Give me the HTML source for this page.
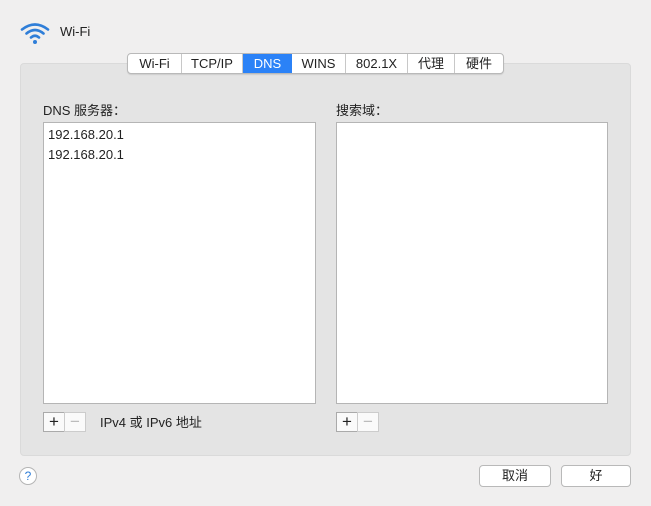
<!DOCTYPE html><html><head><meta charset="utf-8"><style>
*{margin:0;padding:0;box-sizing:border-box}
body{width:651px;height:506px;background:#f0efef;font-family:"Liberation Sans","Noto Sans CJK SC",sans-serif;font-size:13px;color:#222;position:relative;overflow:hidden}
.a{position:absolute}
.panel{left:20px;top:63px;width:611px;height:393px;background:#e4e4e4;border-radius:4px;border:1px solid #dadada}
.tabs{left:127px;top:53px;height:21px;display:flex;border:1px solid #b9b9b9;border-radius:4px;background:#fff;overflow:hidden;box-shadow:0 1px 1px rgba(0,0,0,.1)}
.tabs div{height:19px;line-height:19px;text-align:center;border-right:1px solid #c8c8c8;font-size:13px}
.tabs div:last-child{border-right:none}
.tabs .sel{background:#2b82f7;color:#fff;border-right:none}
.list{background:#fff;border:1px solid #b5b5b5}
.btn{background:#fff;border:1px solid #b9b9b9;border-radius:4px;text-align:center;line-height:19px;font-size:13px}
.pm{width:22px;height:20px;border:1px solid #aaa;background:#fafafa;text-align:center;line-height:17px;font-size:17px}
</style></head><body>
<svg class="a" style="left:20px;top:21px" width="30" height="24" viewBox="0 0 30 24"><g fill="none" stroke="#2f7ed8" stroke-width="2.6" stroke-linecap="round"><path d="M2 8.5 Q15 -1.5 28 8.5"/><path d="M6.5 12.5 Q15 5.5 23.5 12.5"/><path d="M11 16.5 Q15 13 19 16.5"/></g><circle cx="15" cy="21" r="2" fill="#2f7ed8"/></svg>
<div class="a" style="left:60px;top:24px;font-size:13px">Wi-Fi</div>
<div class="a panel"></div>
<div class="a tabs"><div style="width:54px">Wi-Fi</div><div style="width:61px">TCP/IP</div><div class="sel" style="width:49px">DNS</div><div style="width:54px">WINS</div><div style="width:62px">802.1X</div><div style="width:47px">代理</div><div style="width:48px">硬件</div></div>
<div class="a" style="left:43px;top:100px">DNS 服务器：</div>
<div class="a" style="left:336px;top:100px">搜索域：</div>
<div class="a list" style="left:43px;top:122px;width:273px;height:282px;padding:2px 4px;line-height:20px">192.168.20.1<br>192.168.20.1</div>
<div class="a list" style="left:336px;top:122px;width:272px;height:282px"></div>
<div class="a pm" style="left:43px;top:412px;color:#222">+</div><div class="a pm" style="left:64px;top:412px;color:#bbb;border-color:#ccc">−</div>
<div class="a" style="left:100px;top:412px">IPv4 或 IPv6 地址</div>
<div class="a pm" style="left:336px;top:412px;color:#222">+</div><div class="a pm" style="left:357px;top:412px;color:#bbb;border-color:#ccc">−</div>
<div class="a" style="left:19px;top:467px;width:18px;height:18px;border-radius:50%;border:1px solid #b5b5b5;background:#fff;color:#2f7ed8;text-align:center;line-height:16px;font-size:12px">?</div>
<div class="a btn" style="left:479px;top:465px;width:72px;height:22px">取消</div>
<div class="a btn" style="left:561px;top:465px;width:70px;height:22px">好</div>
</body></html>
